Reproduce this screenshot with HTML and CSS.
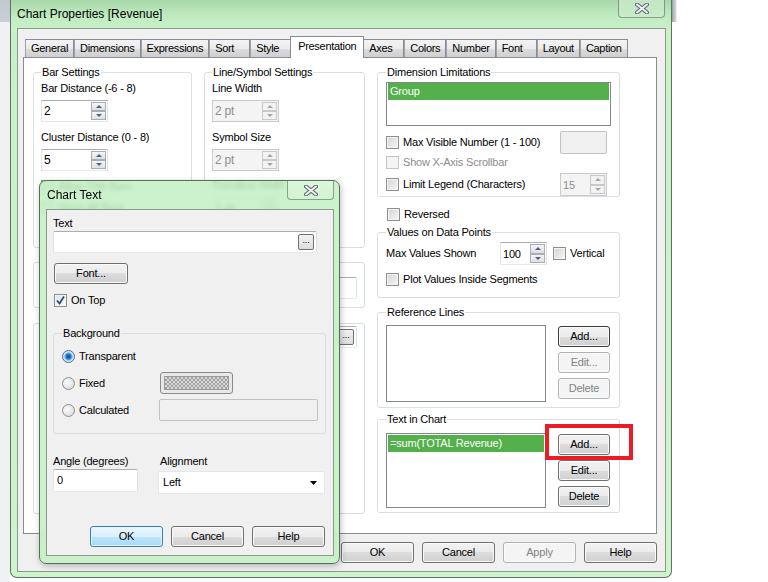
FILE: index.html
```html
<!DOCTYPE html>
<html lang="en">
<head>
  <meta charset="UTF-8">
  <meta name="viewport" content="width=device-width, initial-scale=1.0">
  <title>Chart Properties [Revenue]</title>
  <link rel="stylesheet" href="styles.css">
</head>
<body>
  <div class="screen">
    <div class="edge-left"></div>

    <!-- Main properties window -->
    <div class="window">
      <div class="titlebar">
        <span class="title">Chart Properties [Revenue]</span>
        <span class="close-btn">
          <svg width="14" height="11" viewBox="0 0 14 11">
            <path d="M2 1.5 L12 9.5 M12 1.5 L2 9.5" stroke="#5b6670" stroke-width="4" stroke-linecap="round"/>
            <path d="M2 1.5 L12 9.5 M12 1.5 L2 9.5" stroke="#f2f2f2" stroke-width="2" stroke-linecap="round"/>
          </svg>
        </span>
      </div>

      <div class="client">
        <div class="tabs">
          <span class="tab">General</span>
          <span class="tab">Dimensions</span>
          <span class="tab">Expressions</span>
          <span class="tab">Sort</span>
          <span class="tab">Style</span>
          <span class="tab active">Presentation</span>
          <span class="tab">Axes</span>
          <span class="tab">Colors</span>
          <span class="tab">Number</span>
          <span class="tab">Font</span>
          <span class="tab">Layout</span>
          <span class="tab">Caption</span>
        </div>

        <div class="panel">
          <div class="left-area">
            <div class="top-groups">
              <div class="group bar-settings">
                <span class="group-title">Bar Settings</span>
                <div class="field-label first">Bar Distance (-6 - 8)</div>
                <div class="spin">
                  <span class="spin-value">2</span>
                  <span class="spin-btns"><i class="spin-btn up"></i><i class="spin-btn down"></i></span>
                </div>
                <div class="field-label">Cluster Distance (0 - 8)</div>
                <div class="spin">
                  <span class="spin-value">5</span>
                  <span class="spin-btns"><i class="spin-btn up"></i><i class="spin-btn down"></i></span>
                </div>
                <div class="check-row hidden-first"><span class="check"></span>Allow Thin Bars</div>
                <div class="check-row hidden-next"><span class="check"></span>Show All Bars</div>
              </div>

              <div class="group line-settings">
                <span class="group-title">Line/Symbol Settings</span>
                <div class="field-label first">Line Width</div>
                <div class="spin disabled">
                  <span class="spin-value">2 pt</span>
                  <span class="spin-btns"><i class="spin-btn up"></i><i class="spin-btn down"></i></span>
                </div>
                <div class="field-label">Symbol Size</div>
                <div class="spin disabled">
                  <span class="spin-value">2 pt</span>
                  <span class="spin-btns"><i class="spin-btn up"></i><i class="spin-btn down"></i></span>
                </div>
                <div class="field-label trend">Trendline Width</div>
                <div class="spin">
                  <span class="spin-value">1 pt</span>
                  <span class="spin-btns"><i class="spin-btn up"></i><i class="spin-btn down"></i></span>
                </div>
              </div>
            </div>

            <!-- these two groups sit behind the Chart Text dialog -->
            <div class="group scroll-group">
              <div class="scroll-row">
                <span class="textbox scroll-field"></span>
              </div>
            </div>

            <div class="group error-group">
              <div class="scroll-row">
                <span class="textbox scroll-field dots-field"><span class="dots-btn">...</span></span>
              </div>
            </div>
          </div>

          <div class="right-area">
            <div class="group wide dim-limits">
              <span class="group-title">Dimension Limitations</span>
              <div class="listbox dim-list">
                <div class="list-item selected">Group</div>
              </div>
              <div class="opt-row max-visible">
                <span class="check"></span>Max Visible Number (1 - 100)
                <span class="textbox off small-field"></span>
              </div>
              <div class="opt-row scrollbar-row disabled"><span class="check"></span>Show X-Axis Scrollbar</div>
              <div class="opt-row legend-row">
                <span class="check"></span>Limit Legend (Characters)
                <span class="spin disabled small-spin">
                  <span class="spin-value">15</span>
                  <span class="spin-btns"><i class="spin-btn up"></i><i class="spin-btn down"></i></span>
                </span>
              </div>
            </div>

            <div class="opt-row reversed"><span class="check"></span>Reversed</div>

            <div class="group wide values-group">
              <span class="group-title">Values on Data Points</span>
              <div class="opt-row max-values">
                <span class="opt-label">Max Values Shown</span>
                <span class="spin small-spin">
                  <span class="spin-value">100</span>
                  <span class="spin-btns"><i class="spin-btn up"></i><i class="spin-btn down"></i></span>
                </span>
                <span class="check vertical-check"></span>Vertical
              </div>
              <div class="opt-row plot-row"><span class="check"></span>Plot Values Inside Segments</div>
            </div>

            <div class="group wide ref-group">
              <span class="group-title">Reference Lines</span>
              <div class="list-with-buttons">
                <div class="listbox ref-list"></div>
                <div class="side-buttons">
                  <span class="btn default">Add...</span>
                  <span class="btn off">Edit...</span>
                  <span class="btn off">Delete</span>
                </div>
              </div>
            </div>

            <div class="group wide text-group">
              <span class="group-title">Text in Chart</span>
              <div class="list-with-buttons">
                <div class="listbox text-list">
                  <div class="list-item selected">=sum(TOTAL Revenue)</div>
                </div>
                <div class="side-buttons">
                  <span class="btn">Add...</span>
                  <span class="btn">Edit...</span>
                  <span class="btn">Delete</span>
                </div>
              </div>
            </div>
          </div>
        </div>

        <div class="actions">
          <span class="btn wide-btn">OK</span>
          <span class="btn wide-btn">Cancel</span>
          <span class="btn wide-btn off">Apply</span>
          <span class="btn wide-btn">Help</span>
        </div>
      </div>
    </div>

    <div class="edge-right"></div>

    <!-- Chart Text dialog, floating over the properties window -->
    <div class="dialog">
      <div class="titlebar small">
        <span class="title">Chart Text</span>
        <span class="close-btn">
          <svg width="14" height="11" viewBox="0 0 14 11">
            <path d="M2 1.5 L12 9.5 M12 1.5 L2 9.5" stroke="#5b6670" stroke-width="4" stroke-linecap="round"/>
            <path d="M2 1.5 L12 9.5 M12 1.5 L2 9.5" stroke="#f2f2f2" stroke-width="2" stroke-linecap="round"/>
          </svg>
        </span>
      </div>
      <div class="dialog-client">
        <div class="field-label">Text</div>
        <div class="textbox text-field"><span class="dots-btn">...</span></div>
        <span class="btn font-btn">Font...</span>
        <div class="check-row on-top">
          <span class="check checked">
            <svg width="11" height="11" viewBox="0 0 11 11"><path d="M2 5.5 L4.5 8.5 L9 1.5" fill="none" stroke="#2d4a8c" stroke-width="1.8"/></svg>
          </span>On Top
        </div>

        <div class="group bg-group">
          <span class="group-title">Background</span>
          <div class="radio-row">
            <span class="radio-opt"><span class="radio on"></span>Transparent</span>
          </div>
          <div class="radio-row">
            <span class="radio-opt"><span class="radio"></span>Fixed</span>
            <span class="swatch"><span class="swatch-fill"></span></span>
          </div>
          <div class="radio-row">
            <span class="radio-opt"><span class="radio"></span>Calculated</span>
            <span class="textbox off calc-field"></span>
          </div>
        </div>

        <div class="bottom-fields">
          <div class="angle-col">
            <div class="field-label">Angle (degrees)</div>
            <div class="textbox angle-field">0</div>
          </div>
          <div class="align-col">
            <div class="field-label">Alignment</div>
            <div class="dropdown">
              <span>Left</span>
              <svg width="7" height="4" viewBox="0 0 7 4"><path d="M0 0 H7 L3.5 4 Z" fill="#000"/></svg>
            </div>
          </div>
        </div>

        <div class="dialog-actions">
          <span class="btn wide-btn focused">OK</span>
          <span class="btn wide-btn">Cancel</span>
          <span class="btn wide-btn">Help</span>
        </div>
      </div>
    </div>

    <!-- red highlight drawn over the screenshot -->
    <div class="highlight"></div>
  </div>
</body>
</html>
```

FILE: styles.css
```css
* {
  box-sizing: border-box;
}

body {
  margin: 0;
  font-family: "Liberation Sans", Arial, sans-serif;
  font-size: 11px;
  line-height: 13px;
  letter-spacing: -0.2px;
  color: #000;
  background: #fff;
}

.screen {
  width: 768px;
  height: 582px;
  display: flex;
  position: relative;
  overflow: hidden;
  background: #fff;
}

.edge-left {
  width: 10px;
  background: linear-gradient(#c3c9d0 0, #c9ced4 22px, #eef0f2 22px);
}

.edge-right {
  flex: 1;
  background: linear-gradient(to right, #9aa1a9, #d5d9dc 4px, #fff 5px) no-repeat;
  background-size: 100% 22px;
}

/* ---------- window frames ---------- */
.window {
  width: 662px;
  height: 578px;
  display: flex;
  flex-direction: column;
  border: 1px solid #5d735f;
  border-top: 0;
  border-radius: 0 0 7px 7px;
  background: linear-gradient(#a8d8a9, #c0ebc0 16px, #c8f1c8 30px, #cdf4cd);
}

.titlebar {
  height: 28px;
  display: flex;
  align-items: flex-start;
  padding-left: 6px;
}

.title {
  font-size: 12px;
  line-height: 14px;
  letter-spacing: 0;
  padding-top: 7px;
}

.close-btn {
  margin-left: auto;
  margin-right: 6px;
  width: 47px;
  height: 18px;
  border: 1px solid rgba(70, 90, 72, 0.55);
  border-top: 0;
  border-radius: 0 0 4px 4px;
  background: linear-gradient(rgba(255, 255, 255, 0.35), rgba(255, 255, 255, 0.1));
  display: flex;
  align-items: center;
  justify-content: center;
}

.client {
  flex: 1;
  margin: 0 5px 5px 6px;
  border: 1px solid #8a9b8c;
  background: #f0f0f0;
  padding: 7px 8px 0 5px;
  display: flex;
  flex-direction: column;
}

/* ---------- tabs ---------- */
.tabs {
  display: flex;
  align-items: flex-end;
  height: 21px;
  margin-left: 2px;
}

.tab {
  height: 18px;
  min-width: 41px;
  padding: 2px 5px 0 5px;
  border: 1px solid #898c95;
  border-bottom: 0;
  border-left-color: #9da0a8;
  background: linear-gradient(#f3f3f3, #ebebeb 50%, #dddddd 50%, #cfcfcf);
  letter-spacing: -0.3px;
}

.tab.active {
  height: 22px;
  margin: 0 -1px -1px -1px;
  padding: 3px 7px 0 7px;
  border-left-color: #898c95;
  background: #fff;
  position: relative;
  z-index: 1;
}

.panel {
  height: 477px;
  border: 1px solid #898c95;
  background: #fff;
  padding: 14px 0 0 9px;
  display: flex;
}

/* ---------- group boxes ---------- */
.group {
  border: 1px solid #d5dfe5;
  border-radius: 3px;
  padding: 0 7px;
}

.group.wide {
  padding: 0 8px;
}

.group-title {
  display: table;
  margin-top: -7px;
  padding: 0 1px;
  background: #fff;
}

.left-area {
  width: 332px;
}

.top-groups {
  display: flex;
  gap: 12px;
}

.bar-settings {
  width: 159px;
  height: 176px;
}

.line-settings {
  width: 161px;
  height: 176px;
}

.field-label {
  margin-top: 9px;
}

.field-label.first {
  margin-top: 3px;
}

.field-label.trend {
  margin-top: 8px;
}

.scroll-group {
  margin-top: 14px;
  height: 46px;
}

.error-group {
  margin-top: 15px;
  height: 191px;
}

.scroll-row {
  display: flex;
  align-items: center;
  margin-top: 14px;
}

.scroll-field {
  margin-left: auto;
  width: 120px;
  height: 22px;
}

.error-group .scroll-row {
  margin-top: 2px;
}

.right-area {
  width: 243px;
  margin-left: 12px;
}

.dim-limits {
  height: 125px;
}

.values-group {
  margin-top: 11px;
  height: 66px;
}

.ref-group {
  margin-top: 14px;
  height: 96px;
}

.text-group {
  margin-top: 11px;
  height: 94px;
}

/* ---------- inputs ---------- */
.textbox {
  display: flex;
  align-items: center;
  background: #fff;
  border: 1px solid;
  border-color: #abadb3 #dbdfe6 #e3e9ef #e2e3ea;
  border-radius: 2px;
}

.textbox.off {
  background: #f0f0f0;
  border-color: #bfc2c6;
}

.spin {
  display: flex;
  width: 67px;
  height: 22px;
  margin-top: 3px;
  background: #fff;
  border: 1px solid;
  border-color: #abadb3 #dbdfe6 #e3e9ef #e2e3ea;
}

.field-label + .spin {
  margin-top: 5px;
}

.spin-value {
  flex: 1;
  padding: 4px 0 0 2px;
  font-size: 12px;
}

.spin-btns {
  width: 17px;
  display: flex;
  flex-direction: column;
  padding: 1px;
}

.spin-btn {
  flex: 1;
  display: flex;
  align-items: center;
  justify-content: center;
  border: 1px solid #a9adb6;
  background: linear-gradient(#f6f6f6, #dedfe3);
}

.spin-btn::before {
  content: "";
  border-left: 3px solid transparent;
  border-right: 3px solid transparent;
}

.spin-btn.up::before {
  border-bottom: 3px solid #4d6185;
}

.spin-btn.down::before {
  border-top: 3px solid #4d6185;
}

.spin.disabled {
  background: #f4f4f4;
  border-color: #c9cacc;
  color: #8d8d8d;
}

.spin.disabled .spin-btn {
  border-color: #c8c9cc;
  background: #f2f2f2;
}

.spin.disabled .spin-btn.up::before {
  border-bottom-color: #a6a6a6;
}

.spin.disabled .spin-btn.down::before {
  border-top-color: #a6a6a6;
}

.small-spin {
  width: 47px;
  height: 23px;
  margin-top: 0;
}

.small-spin .spin-value {
  font-size: 11px;
  padding-top: 5px;
}

.check {
  width: 13px;
  height: 13px;
  flex: none;
  border: 1px solid #8e8f8f;
  background: linear-gradient(135deg, #d3d3d3, #f7f7f7);
  box-shadow: inset 0 0 0 1px #f4f4f4;
  display: flex;
  align-items: center;
  justify-content: center;
}

.check-row {
  display: flex;
  align-items: center;
  gap: 4px;
  height: 13px;
}

.hidden-first {
  margin-top: 9px;
}

.hidden-next {
  margin-top: 8px;
}

.opt-row {
  display: flex;
  align-items: center;
  gap: 4px;
}

.opt-row.disabled {
  color: #8d8d8d;
}

.opt-row.disabled .check {
  border-color: #c4c4c4;
  background: #f4f4f4;
}

.listbox {
  border: 1px solid #828790;
  background: #fff;
}

.list-item {
  height: 17px;
  padding: 2px 2px 0;
  color: #fff;
}

.list-item.selected {
  background: #53b04b;
}

.dim-list {
  margin-top: 3px;
  height: 44px;
  padding: 0 1px;
}

.max-visible {
  height: 23px;
  margin-top: 5px;
}

.small-field {
  margin-left: auto;
  margin-right: 4px;
  width: 47px;
  height: 23px;
}

.scrollbar-row {
  height: 13px;
  margin-top: 2px;
}

.legend-row {
  height: 23px;
  margin-top: 4px;
}

.legend-row .small-spin {
  margin-left: auto;
  margin-right: 4px;
}

.reversed {
  height: 13px;
  margin-top: 11px;
  padding-left: 10px;
}

.max-values {
  height: 23px;
  margin-top: 3px;
  gap: 0;
}

.opt-label {
  width: 114px;
}

.vertical-check {
  margin: 0 4px 0 6px;
}

.plot-row {
  height: 13px;
  margin-top: 8px;
}

.list-with-buttons {
  display: flex;
  align-items: flex-start;
}

.ref-group .list-with-buttons {
  margin-top: 6px;
}

.text-group .list-with-buttons {
  margin-top: 7px;
}

.ref-list {
  width: 160px;
  height: 77px;
}

.text-list {
  width: 160px;
  height: 75px;
  padding: 1px;
}

.side-buttons {
  display: flex;
  flex-direction: column;
  gap: 5px;
  margin: 1px 0 0 12px;
}

/* ---------- buttons ---------- */
.btn {
  display: flex;
  align-items: center;
  justify-content: center;
  width: 52px;
  height: 21px;
  border: 1px solid #707070;
  border-radius: 3px;
  background: linear-gradient(#f2f2f2, #ebebeb 50%, #dddddd 50%, #cfcfcf);
  box-shadow: inset 0 0 0 1px #fbfbfb;
}

.btn.default {
  border-color: #3c3c3c;
}

.btn.off {
  border-color: #adb2b5;
  background: #f4f4f4;
  color: #838383;
}

.wide-btn {
  width: 73px;
}

.btn.focused {
  border-color: #3c7fb1;
  background: linear-gradient(#eaf6fd, #d9f0fc 50%, #bee6fd 50%, #a7d9f5);
  box-shadow: inset 0 0 0 1px #e4f4fd;
}

.actions {
  display: flex;
  justify-content: flex-end;
  gap: 8px;
  margin-top: 8px;
}

/* ---------- Chart Text dialog ---------- */
.dialog {
  position: absolute;
  left: 39px;
  top: 180px;
  width: 301px;
  height: 384px;
  display: flex;
  flex-direction: column;
  border: 1px solid #55705a;
  border-radius: 7px;
  background: rgba(196, 240, 196, 0.86);
  backdrop-filter: blur(2px);
  box-shadow: 1px 2px 6px rgba(0, 0, 0, 0.25);
}

.titlebar.small {
  padding-left: 7px;
}

.titlebar.small .close-btn {
  margin-right: 5px;
  height: 19px;
}

.dialog-client {
  flex: 1;
  margin: 0 5px 7px 6px;
  border: 1px solid #8a9b8c;
  background: #f0f0f0;
  padding: 7px 7px 8px 6px;
  display: flex;
  flex-direction: column;
  align-items: flex-start;
}

.dialog-client .field-label {
  margin-top: 0;
}

.text-field {
  width: 264px;
  height: 22px;
  margin-top: 1px;
  justify-content: flex-end;
  padding-right: 2px;
}

.dots-btn {
  display: flex;
  justify-content: center;
  width: 16px;
  height: 16px;
  border: 1px solid #707070;
  border-radius: 2px;
  background: linear-gradient(#f2f2f2, #dcdcdc);
  font-size: 9px;
  line-height: 10px;
}

.dots-field {
  justify-content: flex-end;
  padding-right: 2px;
}

.font-btn {
  width: 74px;
  margin: 10px 0 0 1px;
}

.on-top {
  margin: 10px 0 0 1px;
}

.check.checked {
  background: linear-gradient(135deg, #e0e4ec, #fbfbfb);
}

.bg-group {
  width: 273px;
  margin-top: 26px;
  padding-bottom: 12px;
}

.bg-group .group-title {
  background: #f0f0f0;
  margin-left: 1px;
}

.radio-row {
  display: flex;
  align-items: center;
  height: 22px;
  margin-top: 5px;
}

.radio-opt {
  width: 97px;
  display: flex;
  align-items: center;
  gap: 4px;
  margin-left: 1px;
}

.radio {
  width: 13px;
  height: 13px;
  border-radius: 50%;
  border: 1px solid #8e8f8f;
  background: radial-gradient(circle at 40% 40%, #fbfbfb, #d4d4d4);
}

.radio.on {
  border-color: #4f6f90;
  background: radial-gradient(circle, #0f4f93 0, #1b6fc0 2px, #64b3ea 3.5px, #c9e3f4 4.5px, #e4e4e4 5.5px);
}

.swatch {
  width: 73px;
  height: 22px;
  margin-left: 1px;
  padding: 3px;
  border: 1px solid #8a8a8a;
  border-radius: 3px;
  background: #e8e8e8;
}

.swatch-fill {
  display: block;
  height: 100%;
  border: 1px solid #9a9a9a;
  background: repeating-conic-gradient(#9f9f9f 0 25%, #dadada 0 50%) 0 0 / 4px 4px;
}

.calc-field {
  width: 159px;
  height: 22px;
}

.bottom-fields {
  display: flex;
  gap: 20px;
  margin-top: 21px;
}

.angle-field {
  width: 85px;
  height: 23px;
  margin-top: 1px;
  padding-left: 3px;
}

.align-col .field-label {
  margin-left: 2px;
}

.dropdown {
  width: 167px;
  height: 23px;
  margin-top: 3px;
  display: flex;
  align-items: center;
  justify-content: space-between;
  padding: 0 7px 0 4px;
  background: #fff;
  border: 1px solid #e3e6ea;
}

.dialog-actions {
  display: flex;
  gap: 8px;
  margin: auto 2px 0 37px;
}

/* red annotation box */
.highlight {
  position: absolute;
  left: 545px;
  top: 424px;
  width: 88px;
  height: 36px;
  border: 4px solid #ec1c24;
}
```
